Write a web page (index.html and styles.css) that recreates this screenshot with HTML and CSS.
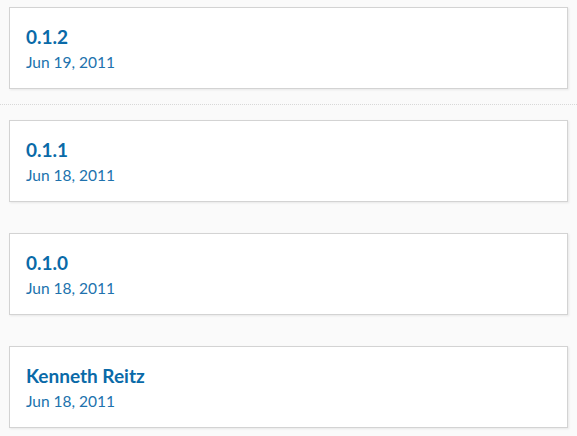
FILE: index.html
```html
<!DOCTYPE html>
<html>
<head>
<meta charset="utf-8">
<link rel="stylesheet" href="styles.css">
</head>
<body>
<div class="timeline">
  <div class="release current">
    <a class="card" href="#">
      <p class="version">0.1.2</p>
      <p class="date">Jun 19, 2011</p>
    </a>
  </div>
  <div class="separator"></div>
  <div class="release">
    <a class="card" href="#">
      <p class="version">0.1.1</p>
      <p class="date">Jun 18, 2011</p>
    </a>
  </div>
  <div class="release">
    <a class="card" href="#">
      <p class="version">0.1.0</p>
      <p class="date">Jun 18, 2011</p>
    </a>
  </div>
  <div class="release last">
    <a class="card" href="#">
      <p class="version">Kenneth Reitz</p>
      <p class="date">Jun 18, 2011</p>
    </a>
  </div>
</div>
</body>
</html>
```
FILE: styles.css
```css
html, body {
  margin: 0;
  padding: 0;
  background: #fafafa;
  font-family: Lato, "Noto Sans", sans-serif;
}
.timeline {
  padding: 7px 9px 0 9px;
  display: flex;
  flex-direction: column;
}
.release {
  margin-bottom: 31px;
}
.release.current {
  margin-bottom: 0;
}
.release.last {
  margin-bottom: 8px;
}
.separator {
  margin: 15px -9px 15px -9px;
  border-top: 1px dotted #d8d8d8;
}
.card {
  display: block;
  box-sizing: border-box;
  height: 82px;
  background: #fff;
  border: 1px solid #d3d3d3;
  box-shadow: 1px 1px 2px rgba(0, 0, 0, 0.08);
  padding: 17px 16px 0 16px;
  text-decoration: none;
}
.version {
  margin: 0;
  font-size: 19px;
  line-height: 24px;
  font-weight: 700;
  color: #0a6aa8;
}
.date {
  margin: 1px 0 0 0;
  font-size: 15.5px;
  line-height: 24px;
  color: #2072ad;
}
```
